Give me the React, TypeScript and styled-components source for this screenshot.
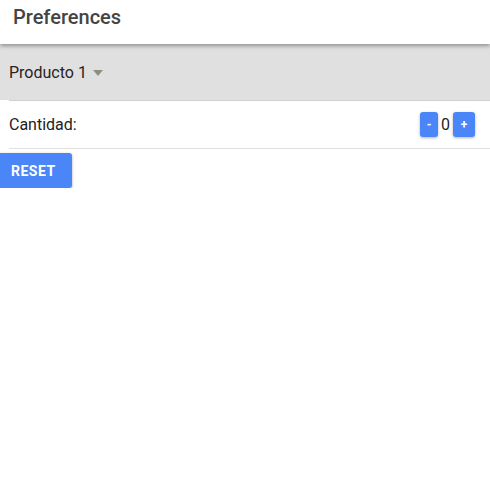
import * as React from "react";
import styled, { createGlobalStyle } from "styled-components";

const GlobalStyle = createGlobalStyle`
  html, body {
    margin: 0;
    padding: 0;
    background: #fff;
    font-family: Roboto, "Liberation Sans", sans-serif;
  }
`;

const Page = styled.div`
  width: 490px;
  display: flex;
  flex-direction: column;
`;

const Header = styled.header`
  height: 44px;
  display: flex;
  align-items: flex-start;
  padding: 5px 13px 0;
  box-sizing: border-box;
  position: relative;
  z-index: 1;
  box-shadow: 0 2px 4px rgba(0, 0, 0, 0.35);
`;

const Title = styled.h1`
  margin: 0;
  font-size: 20px;
  line-height: normal;
  font-weight: 500;
  color: #444;
`;

const ProductBar = styled.div`
  background: #e0e0e0;
  height: 56px;
  display: flex;
  align-items: center;
  padding-left: 9px;
`;

const ProductSelect = styled.button`
  appearance: none;
  border: none;
  background: transparent;
  padding: 0;
  display: flex;
  align-items: center;
  gap: 6px;
  font-family: inherit;
  font-size: 16px;
  color: #2a2222;
  cursor: pointer;
`;

const Caret = styled.span`
  width: 0;
  height: 0;
  border-left: 5px solid transparent;
  border-right: 5px solid transparent;
  border-top: 6px solid #8b9181;
  margin-top: 1px;
`;

const List = styled.div`
  margin-left: 9px;
`;

const Row = styled.div`
  height: 47px;
  border-top: 1px solid #cfcfcf;
  border-bottom: 1px solid #e0e0e0;
  display: flex;
  align-items: center;
  justify-content: space-between;
  padding-right: 15px;
  font-size: 16px;
  color: #222;
`;

const Counter = styled.div`
  display: flex;
  align-items: center;
  gap: 3px;
`;

const Value = styled.span`
  font-size: 16px;
  color: #222;
  min-width: 8px;
  text-align: center;
`;

const StepButton = styled.button<{ wide?: boolean }>`
  appearance: none;
  border: none;
  background: #4a86f8;
  color: #fff;
  font-family: inherit;
  font-weight: 700;
  font-size: 12px;
  width: ${p => (p.wide ? 22 : 18)}px;
  height: 25px;
  border-radius: 3px;
  padding: 0;
  box-shadow: 0 1px 3px rgba(0, 0, 0, 0.3);
  cursor: pointer;
`;

const ResetButton = styled.button`
  appearance: none;
  border: none;
  background: #4a86f8;
  color: #fff;
  font-family: inherit;
  font-weight: 700;
  font-size: 14px;
  letter-spacing: 0.5px;
  text-align: left;
  padding: 0 0 0 11px;
  width: 72px;
  height: 35px;
  margin-top: 4px;
  border-radius: 0 3px 3px 0;
  box-shadow: 0 1px 3px rgba(0, 0, 0, 0.35);
  cursor: pointer;
`;

export default function App() {
  const [count, setCount] = React.useState(0);

  return (
    <Page>
      <GlobalStyle />
      <Header>
        <Title>Preferences</Title>
      </Header>
      <ProductBar>
        <ProductSelect>
          Producto 1 <Caret />
        </ProductSelect>
      </ProductBar>
      <List>
        <Row>
          <span>Cantidad:</span>
          <Counter>
            <StepButton onClick={() => setCount(c => Math.max(0, c - 1))}>
              -
            </StepButton>
            <Value>{count}</Value>
            <StepButton wide onClick={() => setCount(c => c + 1)}>
              +
            </StepButton>
          </Counter>
        </Row>
      </List>
      <div>
        <ResetButton onClick={() => setCount(0)}>RESET</ResetButton>
      </div>
    </Page>
  );
}
